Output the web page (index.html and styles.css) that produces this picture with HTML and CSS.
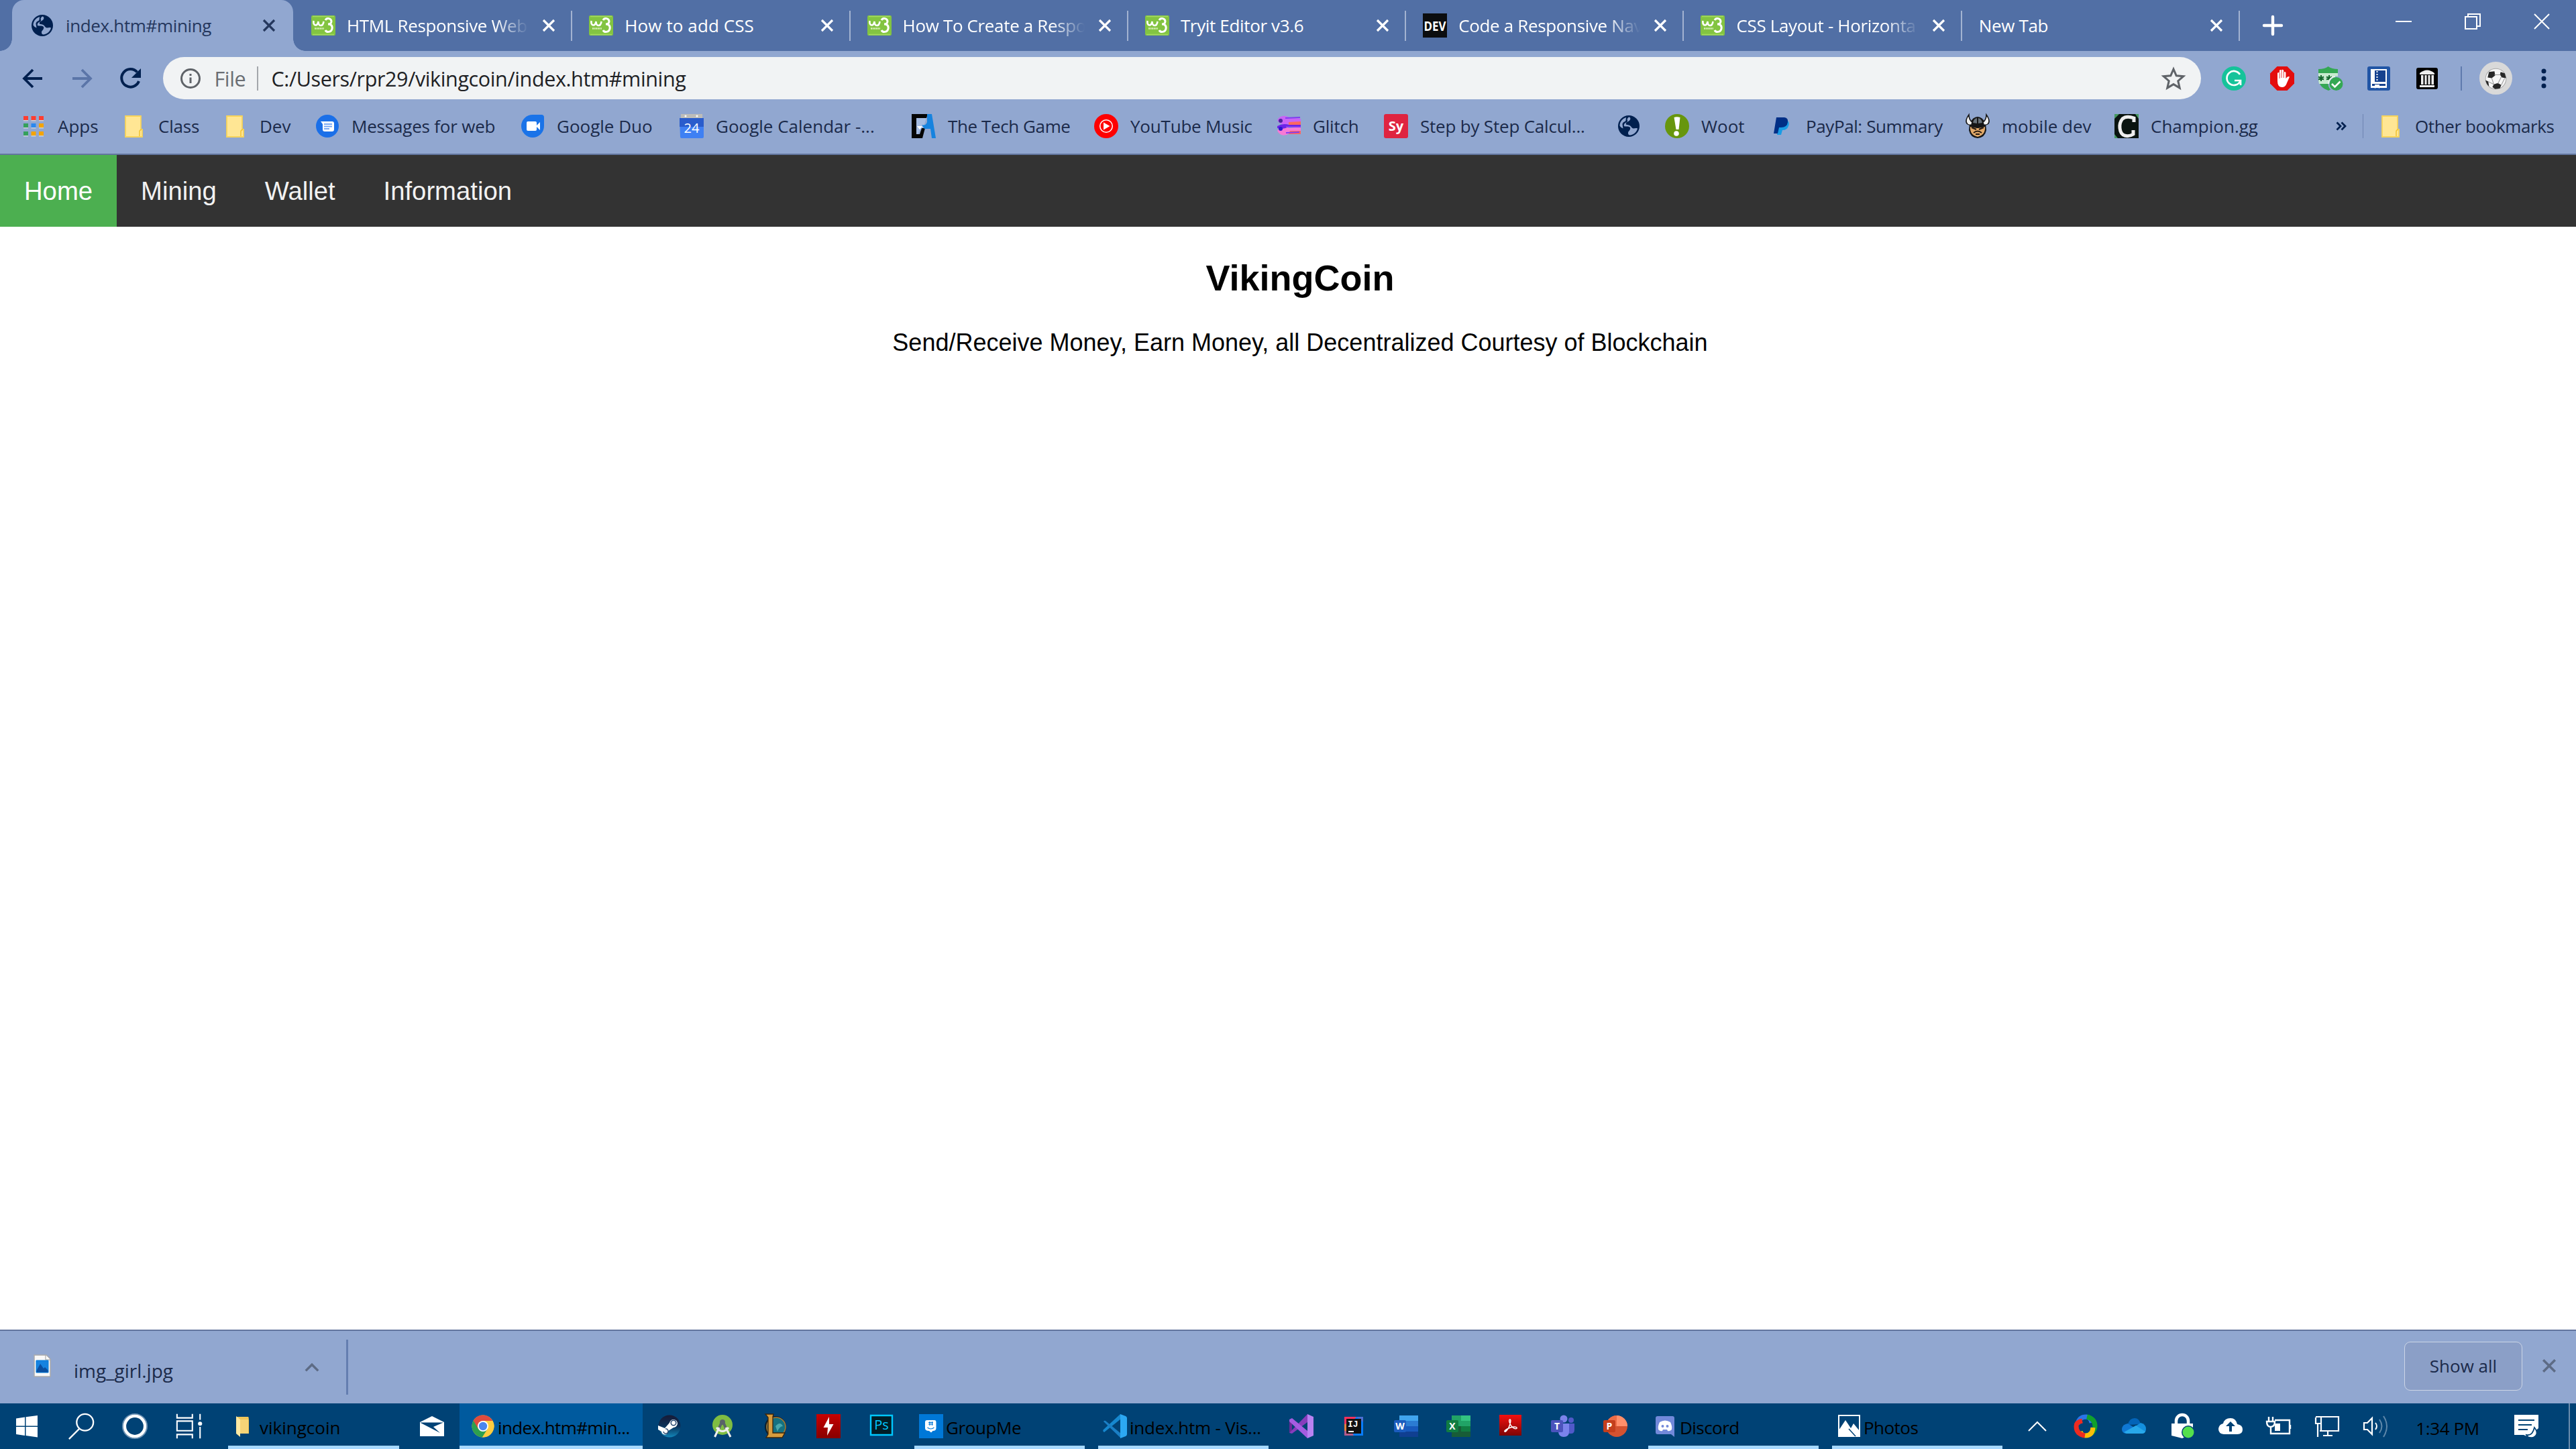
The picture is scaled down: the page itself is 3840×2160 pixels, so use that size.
FILE: index.html
```html
<!DOCTYPE html>
<html lang="en">
<head>
<meta charset="utf-8">
<title>index.htm#mining</title>
<link rel="stylesheet" href="styles.css">
</head>
<body>
<svg class="defs" aria-hidden="true">
  <symbol id="w3" viewBox="0 0 36 36"><rect y="3" width="36" height="30" rx="2" fill="#83c441"/><path d="M2 4.500h32M2 31.500h32" stroke="#a4da62" stroke-width="1.500"/><path d="M3.500 11c-1 8 6 9 7 1 0 8 7 8 8 0" fill="none" stroke="#fff" stroke-width="2.600"/><path d="M21 10c2-4 9-3 9 2 0 3-3 4-5 4 4 0 7 2 6 7s-8 6-10 2" fill="none" stroke="#fff" stroke-width="3"/><path d="M5 22.500h14" stroke="#d7f0b8" stroke-width="2.500" stroke-dasharray="2 .6"/></symbol>
  <symbol id="globe" viewBox="0 0 36 36"><circle cx="18" cy="18" r="16" fill="#00204f"/><path d="M18 4.500c-2 2-3 3-2 5 1 3-4 3-5 6-1 3 1 3 4 3 4 0 6 1 5 4-1 3-3 3-3 6 0 2 1 3 3 3 6-1 10-5 11-10-2-1-4 0-6 0-3 0-3-4-7-5-3-1-5 0-4-3 1-2 4-2 6-5 1-2 0-4-2-4z" fill="#91a7d0"/><path d="M14 5C8 7 4.500 12 4.500 17.500c1 2 3 3 5 4l-1-6c0-4 5-4 5-6z" fill="#91a7d0"/></symbol>
  <symbol id="x" viewBox="0 0 20 20"><path d="M2 2l16 16M18 2L2 18" fill="none" stroke="currentColor" stroke-width="3.200"/></symbol>
  <symbol id="folder" viewBox="0 0 36 36"><path d="M5 3h23v20h2v11H5z" fill="#ffe694" stroke="#f7d35a" stroke-width="1.800"/><path d="M26 33v-7q0-2 3-3" fill="none" stroke="#f2c230" stroke-width="1.500"/></symbol>
</svg>

<header class="tabs">
  <div class="tab active"><svg class="i"><use href="#globe"/></svg><span class="t">index.htm#mining</span><svg class="x"><use href="#x"/></svg></div>
  <div class="tab"><svg class="i"><use href="#w3"/></svg><span class="t fade">HTML Responsive Web</span><svg class="x"><use href="#x"/></svg></div>
  <div class="tab"><svg class="i"><use href="#w3"/></svg><span class="t loose">How to add CSS</span><svg class="x"><use href="#x"/></svg></div>
  <div class="tab"><svg class="i"><use href="#w3"/></svg><span class="t fade">How To Create a Respo</span><svg class="x"><use href="#x"/></svg></div>
  <div class="tab"><svg class="i"><use href="#w3"/></svg><span class="t">Tryit Editor v3.6</span><svg class="x"><use href="#x"/></svg></div>
  <div class="tab"><svg class="i" viewBox="0 0 36 36"><rect width="36" height="36" fill="#0b0d0f"/><text x="18" y="26" text-anchor="middle" textLength="33" lengthAdjust="spacingAndGlyphs" class="dev">DEV</text></svg><span class="t fade">Code a Responsive Nav</span><svg class="x"><use href="#x"/></svg></div>
  <div class="tab"><svg class="i"><use href="#w3"/></svg><span class="t fade">CSS Layout - Horizonta</span><svg class="x"><use href="#x"/></svg></div>
  <div class="tab plain"><span class="t">New Tab</span><svg class="x"><use href="#x"/></svg></div>
  <svg class="plus" viewBox="0 0 28 28"><path d="M14 1v26M1 14h26" stroke="#fff" stroke-width="4.400" stroke-linecap="round"/></svg>
  <div class="wincontrols">
    <svg viewBox="0 0 24 24"><path d="M0 12h24" stroke="#fff" stroke-width="2"/></svg>
    <svg viewBox="0 0 24 24"><path d="M1 5h17v18H1zM5 5V1h18v18h-5" fill="none" stroke="#fff" stroke-width="2"/></svg>
    <svg viewBox="0 0 24 24"><path d="M1 1l22 22M23 1L1 23" stroke="#fff" stroke-width="2"/></svg>
  </div>
</header>

<div class="toolbar">
  <svg class="nav" viewBox="0 0 36 36"><path d="M32 18H5M18 5L5 18l13 13" fill="none" stroke="#00204f" stroke-width="3.800"/></svg>
  <svg class="nav" viewBox="0 0 36 36"><path d="M4 18h27M18 5l13 13-13 13" fill="none" stroke="#5b75a8" stroke-width="3.800"/></svg>
  <svg class="nav" viewBox="0 0 36 36"><path d="M28.500 8.500A13.300 13.300 0 1 0 31 22" fill="none" stroke="#00204f" stroke-width="4"/><path d="M34 3v14H20z" fill="#00204f"/></svg>
  <div class="omnibox">
    <svg class="info" viewBox="0 0 32 32"><circle cx="16" cy="16" r="13.500" fill="none" stroke="#5f6368" stroke-width="3"/><path d="M16 14.500V23M16 9v3" stroke="#5f6368" stroke-width="3"/></svg>
    <span class="scheme">File</span><i class="bar"></i><span class="url">C:/Users/rpr29/vikingcoin/index.htm#mining</span>
    <svg class="star" viewBox="0 0 36 36"><path d="M18 4l4.200 9.800 10.600.9-8 7 2.400 10.400L18 26.600l-9.200 5.500 2.400-10.400-8-7 10.600-.9z" fill="none" stroke="#5f6368" stroke-width="3"/></svg>
  </div>
  <div class="exts">
    <svg viewBox="0 0 36 36"><circle cx="18" cy="18" r="18" fill="#15c39a"/><path d="M27 12A10.500 10.500 0 1 0 27.500 22M28 28v-7h-9" fill="none" stroke="#fff" stroke-width="2.700"/></svg>
    <svg viewBox="0 0 36 36"><path d="M10.500 0h15L36 10.500v15L25.500 36h-15L0 25.500v-15z" fill="#e40d0d"/><path d="M11 22V10q1.500-2 3 0V6q1.500-2 3 0 1.500-2.500 3.200 0v3q1.500-2 3.200 0v9q3-4 5.600-2.500L24 27q-2 4-6 4-7 0-7-9z" fill="#fff"/><path d="M14 10v8M17 6v11M20.300 8v9" stroke="#e40d0d" stroke-width=".8"/></svg>
    <svg viewBox="0 0 36 36"><path d="M0 4Q10 4 14.500 0 20 4 29 4v13q0 14-14 19Q0 31 0 17z" fill="#34a853"/><path d="M0 10h29v16H1q-1-4-1-9z" fill="#c7ebcf"/><path d="M4 13v9M0 15.500l8 4M8 15.500l-8 4M16 13v9M12 15.500l8 4M20 15.500l-8 4" stroke="#12662c" stroke-width="2"/><circle cx="26" cy="26" r="11.500" fill="#91a7d0"/><path d="M15 26a11 11 0 0 1 10-11" fill="none" stroke="#e8f7eb" stroke-width="2"/><circle cx="26.500" cy="26" r="10" fill="#34a853"/><path d="M20 26l4.500 4.500 8-8" fill="none" stroke="#fff" stroke-width="2.600"/></svg>
    <svg viewBox="0 0 36 36"><rect x="1" width="34" height="36" rx="3" fill="#2155a5"/><path d="M6 4h24v28H6z" fill="#fff"/><path d="M12 6h16v17H12zM8 26h20v3H8z" fill="#15418e"/><path d="M15.500 7v15" stroke="#fff" stroke-width="2" stroke-dasharray="2 2"/><path d="M12 27h7v6l-3.500-3-3.500 3z" fill="#fff"/></svg>
    <svg viewBox="0 0 36 36"><rect x="2" y="2" width="32" height="32" rx="3"/><path d="M7 10q11-9 22 0v2H7zM7 28h22v3H7zM9 13h3.500v14H9zm5.500 0h3v14h-3zm5 0h3v14h-3zm5 0H28v14h-3.500z" fill="#eee"/></svg>
  </div>
  <i class="tsep"></i>
  <svg class="avatar" viewBox="0 0 48 48"><circle cx="24" cy="24" r="24" fill="#d9d9d9"/><circle cx="24" cy="25" r="15" fill="#f6f6f6" stroke="#aaa"/><path d="M14 15l8-1 1 6-5 4-6-1zM31 15l6 2 2 7-6-1-3-4zM21 33l6-2 5 3-2 5-7 1-4-3zM9 27l4 2 1 7q-4-3-5-9z" fill="#272727"/><path d="M22 19l9 0M18 24l3 9M32 22l-5 10M13 29l8 4M37 24l-5 10" stroke="#999"/></svg>
  <svg class="dots" viewBox="0 0 8 30"><circle cx="4" cy="4" r="3.500"/><circle cx="4" cy="15" r="3.500"/><circle cx="4" cy="26" r="3.500"/></svg>
</div>

<nav class="bookmarks">
  <div class="bm"><svg class="i" viewBox="0 0 36 36"><path d="M3 3h7v6H3zM14.500 3h7v6h-7zM26 3h7v6h-7z" fill="#ff3d30"/><path d="M3 14h7v6H3zM3 26h7v6H3z" fill="#35a05c"/><path d="M14.500 14h7v6h-7z" fill="#2b88ef"/><path d="M26 14h7v6h-7zM14.500 26h7v6h-7zM26 26h7v6h-7z" fill="#f5a400"/><path d="M3 9.700h7m4.500 0h7m4.500 0h7M3 20.700h7m4.500 0h7m4.500 0h7M3 32.700h7m4.500 0h7m4.500 0h7" stroke="#cbd0d8" stroke-width="1.400"/></svg><span>Apps</span></div>
  <div class="bm"><svg class="i"><use href="#folder"/></svg><span class="snug">Class</span></div>
  <div class="bm"><svg class="i"><use href="#folder"/></svg><span>Dev</span></div>
  <div class="bm"><svg class="i" viewBox="0 0 36 36"><circle cx="18" cy="18" r="17" fill="#1a6fe8"/><path d="M8 11h17q3 0 3 3v9q0 3-3 3H14q-3 0-3-3v-8z" fill="#fff"/><path d="M13 15h12M13 18.500h12M13 22h8" stroke="#78a8f5" stroke-width="1.800"/></svg><span class="snug">Messages for web</span></div>
  <div class="bm"><svg class="i" viewBox="0 0 36 36"><path d="M18 1h13q4 0 4 4v13A17 17 0 1 1 18 1z" fill="#1a73e8"/><rect x="9" y="11" width="15" height="14" rx="2" fill="#fff"/><path d="M23 18l6-6v12z" fill="#fff"/></svg><span>Google Duo</span></div>
  <div class="bm"><svg class="i" viewBox="0 0 36 36"><path d="M2 0h32v6H2z" fill="#bdbdb9"/><path d="M0 6h36v28q0 2-2 2H3q-2 0-2-2z" fill="#3f80f3"/><path d="M0 6h36v13H0z" fill="#2a5ccc"/><circle cx="9" cy="3" r="1.500" fill="#fff"/><circle cx="26" cy="3" r="1.500" fill="#fff"/><text x="18" y="28" class="cal" text-anchor="middle">24</text></svg><span>Google Calendar -...</span></div>
  <div class="bm"><svg class="i" viewBox="0 0 36 36"><path d="M0 0h24l-2 6H7v24h5l3-9h5l-4 15H0z" fill="#050505"/><path d="M7 6h15l-5 15h-3L9 30H7z" fill="#a6bce2"/><path d="M23 0h7l6 36h-6l-2-14h-9l-4-6q6 2 8-4z" fill="#1683df"/><path d="M8 18h8l-4 5z" fill="#fff"/></svg><span class="tight">The Tech Game</span></div>
  <div class="bm"><svg class="i" viewBox="0 0 36 36"><circle cx="18" cy="18" r="18" fill="#f00"/><circle cx="18" cy="18" r="9.300" fill="none" stroke="#fff" stroke-width="1.500"/><path d="M14 12.500l9.500 5.500-9.500 5.500z" fill="#fff"/></svg><span class="snug">YouTube Music</span></div>
  <div class="bm"><svg class="i" viewBox="0 0 36 36"><path d="M1 9q6-10 18-4l17 2v5l-17 2q-12 5-18-5z" fill="#c964f5"/><path d="M1 25q6-10 18-4l17-2v8l-17 2q-12 7-18-4z" fill="#f67ad5"/><path d="M1 18q8-5 18-2l17-2v5H18q-9 5-17 2z" fill="#6c22e8"/><path d="M18 12l18-1v5H18zM20 25h16v5H18z" fill="#ff675f"/><path d="M13 6l22-1M14 19h22M14 28l20-1" stroke="#803df0" stroke-width="2"/><circle cx="6" cy="10" r="3" fill="#4b249e"/><circle cx="6" cy="22" r="3" fill="#2916ce"/></svg><span class="snug">Glitch</span></div>
  <div class="bm"><svg class="i" viewBox="0 0 36 36"><rect width="36" height="36" rx="3" fill="#df2440"/><text x="18" y="25" text-anchor="middle" class="sy">Sy</text></svg><span class="snug">Step by Step Calcul...</span></div>
  <div class="bm"><svg class="i"><use href="#globe"/></svg></div>
  <div class="bm"><svg class="i" viewBox="0 0 36 36"><circle cx="18" cy="18" r="18" fill="#67960d"/><path d="M13.500 5q4-1.500 9 0l-2 18h-4z" fill="#fff"/><circle cx="17" cy="29" r="3.800" fill="#fff"/></svg><span>Woot</span></div>
  <div class="bm"><svg class="i" viewBox="0 0 36 36"><path d="M14 10h13q3 3 1 8-2 6-9 6l-2 7h-6z" fill="#189ce5"/><path d="M10 5h12q6 1 5 7-1 8-10 8h-3l-2 9H6z" fill="#002f86"/></svg><span class="tight">PayPal: Summary</span></div>
  <div class="bm"><svg class="i" viewBox="0 0 36 36"><path d="M6 14q5-10 12-10t12 10l1 10q-2 11-13 12Q7 35 5 24z" fill="#161616"/><path d="M5 .8Q-2 11 3 15q3 2 6 1l1-4Q5 9 5 .8zM31 .8q7 10.200 2 14.200-3 2-6 1l-1-4q5-3 5-11.200z" fill="#f2f2f2" stroke="#161616" stroke-width="1.500"/><path d="M11 13q1-6 6-7v8zM25 13q-1-6-6-7v8z" fill="#69727a"/><path d="M7 19l10 2h2l10-2q1 12-11 15Q6 31 7 19z" fill="#e2a969"/><path d="M9 20l7 3M27 20l-7 3M12 28q6-5 12 0M15 30h6" fill="none" stroke="#251911" stroke-width="2"/></svg><span>mobile dev</span></div>
  <div class="bm"><svg class="i" viewBox="0 0 36 36"><rect width="36" height="36" fill="#0a1410"/><path d="M0 0h7L0 7zM36 7v-7h-5zM0 30l5 6H0z" fill="#459960"/><path d="M29 12V6q-11-4-17 1-5 6-4 14 1 9 7 11 7 2 13-2v-6" fill="none" stroke="#eee" stroke-width="5"/></svg><span>Champion.gg</span></div>
  <div class="more"><svg viewBox="0 0 16 14"><path d="M1.500 1.500L7 7l-5.500 5.500M8.500 1.500L14 7l-5.500 5.500" fill="none" stroke="#00204f" stroke-width="2.800"/></svg><i></i></div>
  <div class="bm"><svg class="i"><use href="#folder"/></svg><span class="tight">Other bookmarks</span></div>
</nav>

<main class="page">
  <div class="topnav"><a class="on">Home</a><a>Mining</a><a>Wallet</a><a>Information</a></div>
  <section class="hero"><h2>VikingCoin</h2><p>Send/Receive Money, Earn Money, all Decentralized Courtesy of Blockchain</p></section>
</main>

<div class="shelf">
  <svg class="file" viewBox="0 0 26 34"><path d="M1 1h18l6 6v26H1z" fill="#f8f8f8" stroke="#aaa" stroke-width="1.500"/><path d="M18 1v7h7" fill="#fff" stroke="#999"/><path d="M4 9h18v18H4z" fill="#1683e0"/><path d="M4 25l6-11 5 7 2-2 5 5v3H4z" fill="#0b4fa0"/><path d="M4 9h18v18H4z" fill="none" stroke="#0078d7"/></svg>
  <span class="fname">img_girl.jpg</span>
  <svg class="caret" viewBox="0 0 20 12"><path d="M1.500 10.500L10 2l8.500 8.500" fill="none" stroke="#5d6b85" stroke-width="3.200"/></svg>
  <i class="ssep"></i>
  <button class="showall">Show all</button>
  <svg class="sx"><use href="#x"/></svg>
</div>

<footer class="taskbar">
  <div class="sys"><svg viewBox="0 0 36 36"><path d="M2 6.500l13-2v13H2zM16.500 4.300L34 2v15.500H16.500zM2 19h13v13L2 30zM16.500 19H34v15.500l-17.500-2.400z" fill="#fff"/></svg></div>
  <div class="sys"><svg class="big" viewBox="0 0 44 44"><circle cx="28" cy="16" r="13" fill="none" stroke="#fff" stroke-width="2.400"/><path d="M19 26L3 42" stroke="#fff" stroke-width="2.400"/></svg></div>
  <div class="sys"><svg class="big" viewBox="0 0 44 44"><circle cx="22" cy="22" r="16" fill="none" stroke="#fff" stroke-width="5"/><circle cx="22" cy="22" r="19" fill="none" stroke="#6f94b5" stroke-width="2"/></svg></div>
  <div class="sys"><svg class="big" viewBox="0 0 44 44"><path d="M3 3v6h24V3M3 14h24v15H3zM3 41v-6h24v6M39 3v9M39 23v18" fill="none" stroke="#fff" stroke-width="2.200"/><circle cx="39" cy="18" r="3.200" fill="#fff"/></svg></div>
  <div class="win first"><svg viewBox="0 0 36 36"><path d="M6 4h17q1 0 1 8v17H6z" fill="#f0c75a"/><path d="M5 3l6 5v26l-6-5z" fill="#ffe9a2"/><path d="M11 8h12v21H11z" fill="#f5d377"/></svg><span>vikingcoin</span></div>
  <div class="app"><svg viewBox="0 0 36 36"><path d="M0 12L18 3l18 9v21H0z" fill="#fff"/><path d="M1 12.500h34L20 19l10 9L1 13z" fill="#004275"/></svg></div>
  <div class="win current"><svg viewBox="0 0 36 36"><circle cx="18" cy="18" r="16.500" fill="#fbc02d"/><path d="M3.700 9.800A16.500 16.500 0 0 0 17 34.500L25 22z" fill="#2da04f"/><path d="M32.300 9.800H18l7 12-8 12.700A16.500 16.500 0 0 0 32.300 9.800z" fill="#ffcd40"/><path d="M18 10h14.400A16.500 16.500 0 0 0 3.700 9.800L11 22z" fill="#de4b3e"/><circle cx="18" cy="18" r="8" fill="#fff"/><circle cx="18" cy="18" r="6.200" fill="#4a86ee"/></svg><span class="tighter">index.htm#min...</span></div>
  <div class="app a2"><svg viewBox="0 0 36 36"><defs><linearGradient id="g1" x2="0" y2="1"><stop stop-color="#171a36"/><stop offset=".5" stop-color="#0b3159"/><stop offset="1" stop-color="#1286b9"/></linearGradient></defs><circle cx="18" cy="18" r="16.500" fill="url(#g1)"/><path d="M1 17l10 4 7-8a6 6 0 1 1 6 7l-8 5a5 5 0 0 1-10 1l-5-3z" fill="#fff"/><circle cx="24" cy="13" r="3.800" fill="none" stroke="#23436d" stroke-width="1.500"/><path d="M9 26a3.500 3.500 0 1 0 3-4" fill="none" stroke="#23436d" stroke-width="1.300"/></svg></div>
  <div class="app a2"><svg viewBox="0 0 36 36"><circle cx="18" cy="16" r="15" fill="#7fbd42"/><circle cx="18" cy="12" r="4" fill="#596368"/><path d="M16 14l-4 9M20 14l4 9" stroke="#596368" stroke-width="4"/><path d="M13 20L6.500 34M23 20l7 14M9 20q9 11 18 0" fill="none" stroke="#eee" stroke-width="3"/></svg></div>
  <div class="app a2"><svg viewBox="0 0 36 36"><circle cx="18" cy="19" r="16" fill="#0c1d29"/><circle cx="19" cy="19" r="14" fill="#147181" stroke="#a57b35" stroke-width="1.600"/><path d="M18 18q7-8 11 0-5 0-8 8z" fill="#48a8ad"/><path d="M3 0h12l-1 4v24h18l-4 7H4l3-5V5z" fill="#d69c3e" stroke="#3d260b" stroke-width="1.300"/></svg></div>
  <div class="app a2"><svg viewBox="0 0 36 36"><defs><linearGradient id="g2" x2="0" y2="1"><stop stop-color="#c80000"/><stop offset="1" stop-color="#870000"/></linearGradient></defs><path d="M0 0h36v36H0z" fill="url(#g2)"/><path d="M19 4L10.500 20H17l-1 12 9.500-17H19z" fill="#fff"/></svg></div>
  <div class="app a2"><svg viewBox="0 0 36 36"><path d="M2 2h32v29H2z" fill="#001d26" stroke="#00c8ff" stroke-width="2.400"/><text x="18" y="23" text-anchor="middle" class="ps">Ps</text></svg></div>
  <div class="win"><svg viewBox="0 0 36 36"><path d="M0 0h36v36H0z" fill="#0078d7"/><path d="M12 9h11q2.500 0 2.500 3v9q0 4-5 4L18 27.500 15 25q-6 0-6-4v-9q0-3 3-3z" fill="#fff"/><path d="M14 12.500h7M14 15h7M16 11v6M19.500 11v6M12.500 20q5 4 10 0" fill="none" stroke="#0078d7" stroke-width="1.200"/></svg><span class="tight">GroupMe</span></div>
  <div class="win"><svg viewBox="0 0 36 36"><path d="M26 0L1 23q-2 2 1 4L27 7z" fill="#1688cf"/><path d="M1 11q1-2 3-1l23 19v7z" fill="#1a7fc5"/><path d="M26 0l8 3q2 1 2 3v24q0 2-2 3l-8 3z" fill="#2ca8f2"/></svg><span class="snug">index.htm - Vis...</span></div>
  <div class="app"><svg viewBox="0 0 36 36"><path d="M0 8v20l4-3V12z" fill="#6a2a97"/><path d="M0 28L27 0v12L4 29z" fill="#873dbc"/><path d="M4 6l23 19v11L0 11V8z" fill="#a55ce0"/><path d="M27 0l9 4v28l-9 4z" fill="#b982f2"/></svg></div>
  <div class="app"><svg viewBox="0 0 36 36"><path d="M4 4h28v28H4z" fill="#087cfa"/><path d="M4 4h18L7 20l-3 4z" fill="#fe315d"/><path d="M4 15l5-2 9 19H4z" fill="#b45b8a"/><path d="M4 15h4v10H4z" fill="#e4803b"/><path d="M22 4h10v8z" fill="#4d6fd3"/><path d="M7 7h22v22H7z" fill="#111"/><text x="9" y="19" class="ij">IJ</text><path d="M10 26h8" stroke="#fff" stroke-width="2"/></svg></div>
  <div class="app"><svg viewBox="0 0 36 36"><path d="M8 2h28v8H8z" fill="#41a5ee"/><path d="M8 10h28v8H8z" fill="#2b7cd3"/><path d="M8 18h28v8H8z" fill="#185abd"/><path d="M8 26h28v8H8z" fill="#103f91"/><rect y="9" width="18" height="18" rx="2" fill="#1b5cbe"/><text x="9" y="23" text-anchor="middle" class="of">W</text></svg></div>
  <div class="app"><svg viewBox="0 0 36 36"><path d="M8 2h28v32H8z" fill="#21a366"/><path d="M22 2h14v8H22z" fill="#33c481"/><path d="M8 18h28v16H8z" fill="#185c37"/><path d="M22 18h14v8H22z" fill="#107c41"/><rect y="9" width="18" height="18" rx="2" fill="#107c41"/><text x="9" y="23" text-anchor="middle" class="of">X</text></svg></div>
  <div class="app"><svg viewBox="0 0 36 36"><defs><linearGradient id="g3" x2="0" y2="1"><stop stop-color="#f50f0f"/><stop offset="1" stop-color="#7c0505"/></linearGradient></defs><path d="M1 1h33v31H1z" fill="url(#g3)"/><path d="M17 8c-3 0 0 8 3 11 4 4 8 3 7 1s-8-1-12 1-7 4-6 5 4-2 6-6 4-12 2-12z" fill="none" stroke="#fff" stroke-width="1.500"/></svg></div>
  <div class="app"><svg viewBox="0 0 36 36"><circle cx="19" cy="7" r="5.500" fill="#7b83eb"/><circle cx="30" cy="9" r="4" fill="#5059c9"/><path d="M24 14h11v9q0 6-5 6h-6z" fill="#5059c9"/><path d="M12 14h15v12q0 8-8 8-7 0-8-7z" fill="#7b83eb"/><rect y="9" width="18" height="18" rx="2" fill="#4b53bc"/><text x="9" y="23" text-anchor="middle" class="of">T</text></svg></div>
  <div class="app"><svg viewBox="0 0 36 36"><circle cx="20" cy="18" r="16" fill="#d35230"/><path d="M4 18a16 16 0 0 1 16-16v16z" fill="#ed6c47"/><path d="M20 2a16 16 0 0 1 16 16H20z" fill="#ff8f6b"/><rect y="9" width="18" height="18" rx="2" fill="#c43e1c"/><text x="9" y="23" text-anchor="middle" class="of">P</text></svg></div>
  <div class="win"><svg viewBox="0 0 36 36"><path d="M7 3h22q3 0 3 3v28l-5-4H7q-3 0-3-3V6q0-3 3-3z" fill="#7289da"/><path d="M10 12q8-5 16 0 3 6 2 11-3 3-6 2l-1-2h-6l-1 2q-3 1-6-2-1-5 2-11z" fill="#fff"/><circle cx="14.500" cy="18" r="2" fill="#7289da"/><circle cx="21.500" cy="18" r="2" fill="#7289da"/></svg><span class="short">Discord</span></div>
  <div class="win"><svg viewBox="0 0 36 36"><path d="M3 2h31v31H3z" fill="#004275" stroke="#fff" stroke-width="2"/><path d="M3 24L13 9l8 12 4-7 9 11v9H3z" fill="#fff"/><path d="M18 22l10 11" stroke="#004275" stroke-width="1.500"/></svg><span class="short">Photos</span></div>
  <div class="tray">
    <svg viewBox="0 0 36 36"><path d="M5 25L18 12l13 13" fill="none" stroke="#fff" stroke-width="2"/></svg>
    <svg viewBox="0 0 36 36"><g fill="none" stroke-width="7"><path d="M6 15Q8 4 19 4q7 1 8 9" stroke="#2a75e8"/><path d="M20 4q12 3 12 14 0 6-6 11" stroke="#10a02d"/><path d="M29 20q-1 12-11 12-6 0-8-6" stroke="#fbbf08"/><path d="M17 32Q4 30 4 18q0-6 9-8" stroke="#ee2b20"/></g></svg>
    <svg viewBox="0 0 36 36"><path d="M9 16q2-10 10-10 7 0 9 9z" fill="#0364b8"/><path d="M6 29q-6-1-6-7 1-7 9-8l20 13z" fill="#0f78d4"/><path d="M28 13q8 2 8 9 0 7-7 7l-12-9z" fill="#1490df"/><path d="M3 27l18-10 14 9q-1 3-5 3H7z" fill="#28a8ea"/></svg>
    <svg viewBox="0 0 36 36"><path d="M9 15V10a9 9 0 0 1 18 0v5" fill="none" stroke="#fff" stroke-width="4.500"/><path d="M2 14h32v14L18 36 2 32z" fill="#fff"/><circle cx="27" cy="27" r="10" fill="#004275"/><circle cx="27" cy="27" r="8.500" fill="#54e04c"/></svg>
    <svg viewBox="0 0 36 36"><path d="M8 30q-8-1-8-8 1-7 7-8Q9 6 18 6q8 0 10 9 8 1 8 8 0 7-8 7z" fill="#fff"/><path d="M18 11l7 7h-5v8h-4v-8h-5z" fill="#004275"/></svg>
    <svg viewBox="0 0 36 36"><path d="M3 4v7M9 4v7M0 11h12q0 8-6 8t-6-8zM6 18v12M12 9h22v20H5M35 16v6" fill="none" stroke="#fff" stroke-width="2.400"/><path d="M12 14h8v11h-8z" fill="#fff"/></svg>
    <svg viewBox="0 0 36 36"><path d="M1 4h34v21H7M9 4v21M1 5v9h7M4 14v20M19 25v6M12 32h14" fill="none" stroke="#fff" stroke-width="2.200"/></svg>
    <svg viewBox="0 0 36 36"><path d="M1 13h5l7-7v24l-7-7H1z" fill="none" stroke="#fff" stroke-width="2.200"/><path d="M18 13q4 5 0 10" fill="none" stroke="#fff" stroke-width="2"/><path d="M24 8q7 10 0 20M30 3q10 15 0 31" fill="none" stroke="#5f88aa" stroke-width="2"/></svg>
  </div>
  <div class="clock"><span class="tight">1:34 PM</span></div>
  <div class="note"><svg viewBox="0 0 36 36"><path d="M0 1h36v20l-15 13-7-3H0z" fill="#fff"/><path d="M6 9h24M6 16h20M6 23h14" stroke="#004275" stroke-width="2.200"/><path d="M30 20q8 10-2 15-8 1-10-4 9 2 12-11z" fill="#fff" stroke="#004275" stroke-width="1.800"/></svg></div>
</footer>
</body>
</html>
```
FILE: styles.css
```css
* { box-sizing: border-box; }
html, body { margin: 0; height: 100%; }
body {
  width: 3840px; height: 2160px; overflow: hidden;
  display: flex; flex-direction: column;
  background: #fff; color: #1b2a4a;
  font-family: "Open Sans", "Noto Sans", sans-serif; font-size: 26px;
}
svg { display: block; flex: none; overflow: visible; }
span { white-space: nowrap; }
.defs { position: absolute; width: 0; height: 0; }
.i { width: 36px; height: 36px; }

/* label tracking */
.snug { letter-spacing: -0.2px; }
.tight { letter-spacing: -0.4px; }
.tighter { letter-spacing: -0.62px; }
.short { letter-spacing: -0.55px; }

/* tab strip */
.tabs { display: flex; height: 76px; background: #516fa5; color: #fff; }
.tab { display: flex; align-items: center; width: 414.300px; padding: 0 25px; position: relative; }
.tab:not(.active)::after { content: ""; position: absolute; right: 0; top: 16px; width: 2px; height: 45px; background: #a3b3d1; }
.tab .t { flex: 1; margin-left: 17px; min-width: 0; letter-spacing: -0.35px; }
.tab .loose { letter-spacing: 0.1px; }
.tab .fade { -webkit-mask-image: linear-gradient(90deg, #000 82%, transparent); mask-image: linear-gradient(90deg, #000 82%, transparent); }
.tab .x { width: 20px; height: 20px; margin-left: 20px; }
.tab.plain .t { margin-left: 0; }
.tab.active { width: 419px; margin: 0 2px 0 18px; padding: 0 26px 0 27px; background: #91a7d0; color: #25375d; border-radius: 18px 18px 0 0; }
.tab.active::before, .tab.active::after { content: ""; position: absolute; bottom: 0; width: 18px; height: 18px; }
.tab.active::before { left: -18px; background: radial-gradient(circle at 0 0, transparent 17.500px, #91a7d0 18px); }
.tab.active::after { right: -18px; background: radial-gradient(circle at 100% 0, transparent 17.500px, #91a7d0 18px); }
.plus { width: 28px; height: 28px; margin: 24px 0 0 35px; }
.wincontrols { display: flex; gap: 79px; margin: 20px 39px 0 auto; }
.wincontrols svg { width: 24px; height: 24px; }
.dev { font: bold 20px "Open Sans", sans-serif; fill: #fff; }

/* toolbar */
.toolbar { display: flex; align-items: center; height: 81px; background: #91a7d0; padding-left: 31px; }
.nav { width: 36px; height: 36px; margin-right: 36.500px; }
.omnibox { display: flex; align-items: center; width: 3038px; height: 63px; margin-left: -6px; padding: 0 23px 0 25px; border-radius: 32px; background: #f1f3f4; font-size: 30.500px; letter-spacing: -0.38px; }
.info { width: 32px; height: 32px; margin-right: 20px; }
.scheme { width: 63px; color: #6a6e73; }
.bar { width: 2px; height: 36px; background: #a4a7ab; margin-right: 20px; }
.url { color: #202124; }
.star { width: 36px; height: 36px; margin-left: auto; }
.exts { display: flex; gap: 36px; margin-left: 31px; }
.exts svg { width: 36px; height: 36px; }
.tsep { width: 2px; height: 36px; margin-left: 32px; background: #5f7aad; }
.avatar { width: 49px; height: 49px; margin-left: 26px; }
.dots { width: 8px; height: 30px; margin-left: 43px; fill: #00204f; }

/* bookmarks */
.bookmarks {
  display: grid; align-items: center; height: 74px; padding: 0 0 10px 32px; background: #91a7d0;
  grid-template-columns: 150px 151px 137px 306px 237px 346px 272px 272px 160px 347px 72px 156px 292px 222px 316px 78px 1fr;
  border-bottom: 2px solid #62759e;
}
.bm { display: flex; align-items: center; gap: 18px; min-width: 0; }
.more { display: flex; align-items: center; justify-content: space-between; height: 36px; margin: 0 23px 0 14px; }
.more svg { width: 16px; height: 24px; }
.more i { width: 1px; height: 36px; background: #6d84b2; }
.cal { font: 20px "Open Sans", sans-serif; fill: #fff; }
.sy { font: bold 20px "Open Sans", sans-serif; fill: #fff; }

/* web page */
.page { flex: 1; background: #fff; color: #000; font-family: "Liberation Sans", Arial, sans-serif; font-size: 36px; }
.topnav { display: flex; height: 107px; background: #333; }
.topnav a { padding: 31.500px 36px; font-size: 38.250px; line-height: 44px; color: #f2f2f2; }
.topnav .on { background: #4caf50; color: #fff; }
.hero { padding-left: 36px; text-align: center; }
.hero h2 { margin: 45px 0 0; font-size: 54px; line-height: 62px; }
.hero p { margin: 45px 0 0; line-height: 41px; }

/* download shelf */
.shelf { display: flex; align-items: center; height: 110px; background: #91a7d0; border-top: 2px solid #62759e; padding-left: 50px; }
.file { width: 26px; height: 34px; margin-top: -4px; }
.fname { width: 344px; margin: 10px 0 0 34px; font-size: 28px; }
.caret { width: 22px; height: 13px; }
.ssep { width: 3px; height: 82px; margin-left: 40px; background: #647eb0; }
.showall { width: 176px; height: 73px; margin: -4px 0 0 auto; border: 1px solid #ccd5e6; border-radius: 9px; background: #8b9fc7; font: 500 26px "Open Sans", sans-serif; color: #1b2a4a; padding: 0; }
.sx { width: 22px; height: 22px; margin: -4px 29px 0; color: #5d6b85; }

/* taskbar */
.taskbar { display: flex; height: 68px; background: #004275; color: #000; }
.taskbar > div { display: flex; align-items: center; justify-content: center; flex: none; }
.taskbar svg { width: 36px; height: 36px; }
.taskbar svg.big { width: 42px; height: 42px; }
.sys { width: 80.500px; }
.app { width: 78px; }
.app.a2 { width: 79px; }
.taskbar > .win { width: 254px; margin: 0 10px; padding: 5px 0 0 7px; justify-content: flex-start; border-bottom: 5px solid #a6d8ff; }
.win span { margin-left: 4px; padding-top: 3px; }
.taskbar > .first { margin-left: 18px; width: 255px; }
.taskbar > .current { width: 273px; margin: 0 0 0 2px; padding-left: 17px; background: #005a9e; }
.tray { margin-left: 6px; gap: 36px; width: 576px; }
.clock { width: 143px; padding-top: 5px; }
.note { width: 111px; padding-right: 17px; border-right: 2px solid #6b8dad; }
.ps { font: 20px "Open Sans", sans-serif; fill: #00c8ff; }
.ij { font: bold 13px "Liberation Mono", monospace; fill: #fff; }
.of { font: bold 14px "Open Sans", sans-serif; fill: #fff; }
```
